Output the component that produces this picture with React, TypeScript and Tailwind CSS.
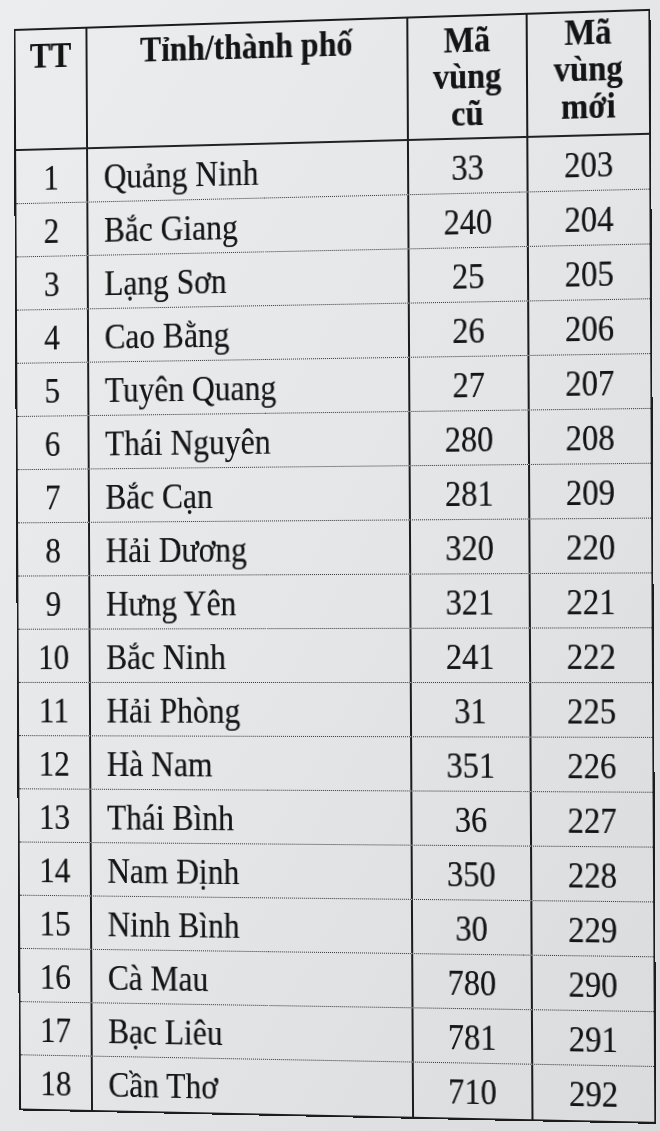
import React from "react";

const rows: [number, string, string, string][] = [
  [1, "Quảng Ninh", "33", "203"],
  [2, "Bắc Giang", "240", "204"],
  [3, "Lạng Sơn", "25", "205"],
  [4, "Cao Bằng", "26", "206"],
  [5, "Tuyên Quang", "27", "207"],
  [6, "Thái Nguyên", "280", "208"],
  [7, "Bắc Cạn", "281", "209"],
  [8, "Hải Dương", "320", "220"],
  [9, "Hưng Yên", "321", "221"],
  [10, "Bắc Ninh", "241", "222"],
  [11, "Hải Phòng", "31", "225"],
  [12, "Hà Nam", "351", "226"],
  [13, "Thái Bình", "36", "227"],
  [14, "Nam Định", "350", "228"],
  [15, "Ninh Bình", "30", "229"],
  [16, "Cà Mau", "780", "290"],
  [17, "Bạc Liêu", "781", "291"],
  [18, "Cần Thơ", "710", "292"],
];

function T({ children }: { children: React.ReactNode }) {
  return <span className="inline-block scale-y-[1.14]">{children}</span>;
}

export default function App() {
  return (
    <div className="w-[660px] h-[1131px] overflow-hidden bg-gradient-to-br from-[#ecedee] via-[#e4e6e7] to-[#d9dbdc] font-['Liberation_Serif',serif] text-[#141414] [text-shadow:0_0_0.6px_rgba(0,0,0,0.55)] pt-[19px] pl-[11px]">
      <div className="w-[638px] border-2 border-[#1c1c1c] [transform:perspective(1200px)_rotateY(-3.3deg)_rotate(-0.3deg)]">
        <div className="grid grid-cols-[72px_324px_118px_120px] h-[122px] border-b-2 border-[#222] font-bold text-[32px] leading-[32px]">
          <div className="flex justify-center pt-[7px]">
            <span className="inline-block scale-y-[1.14] origin-top">TT</span>
          </div>
          <div className="flex justify-center border-l-2 border-[#1c1c1c] pt-[4px]">
            <span className="inline-block scale-y-[1.14] origin-top">Tỉnh/thành phố</span>
          </div>
          <div className="flex justify-center border-l-2 border-[#1c1c1c] pt-[4px]">
            <span className="inline-block scale-y-[1.14] origin-top text-center">
              Mã
              <br />
              vùng
              <br />
              cũ
            </span>
          </div>
          <div className="flex justify-center border-l-2 border-[#1c1c1c] pt-[0px]">
            <span className="inline-block scale-y-[1.14] origin-top text-center">
              Mã
              <br />
              vùng
              <br />
              mới
            </span>
          </div>
        </div>
        {rows.map(([n, name, oldC, newC], i) => (
          <div
            key={n}
            className={
              "grid grid-cols-[72px_324px_118px_120px] h-[54px] text-[32px] leading-none " +
              (i < rows.length - 1 ? "border-b-[1.5px] border-dotted border-[#333]" : "")
            }
          >
            <div className="flex items-center justify-center">
              <T>{n}</T>
            </div>
            <div className="flex items-center pl-[16px] border-l-2 border-[#1c1c1c]">
              <T>{name}</T>
            </div>
            <div className="flex items-center justify-center border-l-2 border-[#1c1c1c]">
              <T>{oldC}</T>
            </div>
            <div className="flex items-center justify-center border-l-2 border-[#1c1c1c]">
              <T>{newC}</T>
            </div>
          </div>
        ))}
      </div>
    </div>
  );
}
